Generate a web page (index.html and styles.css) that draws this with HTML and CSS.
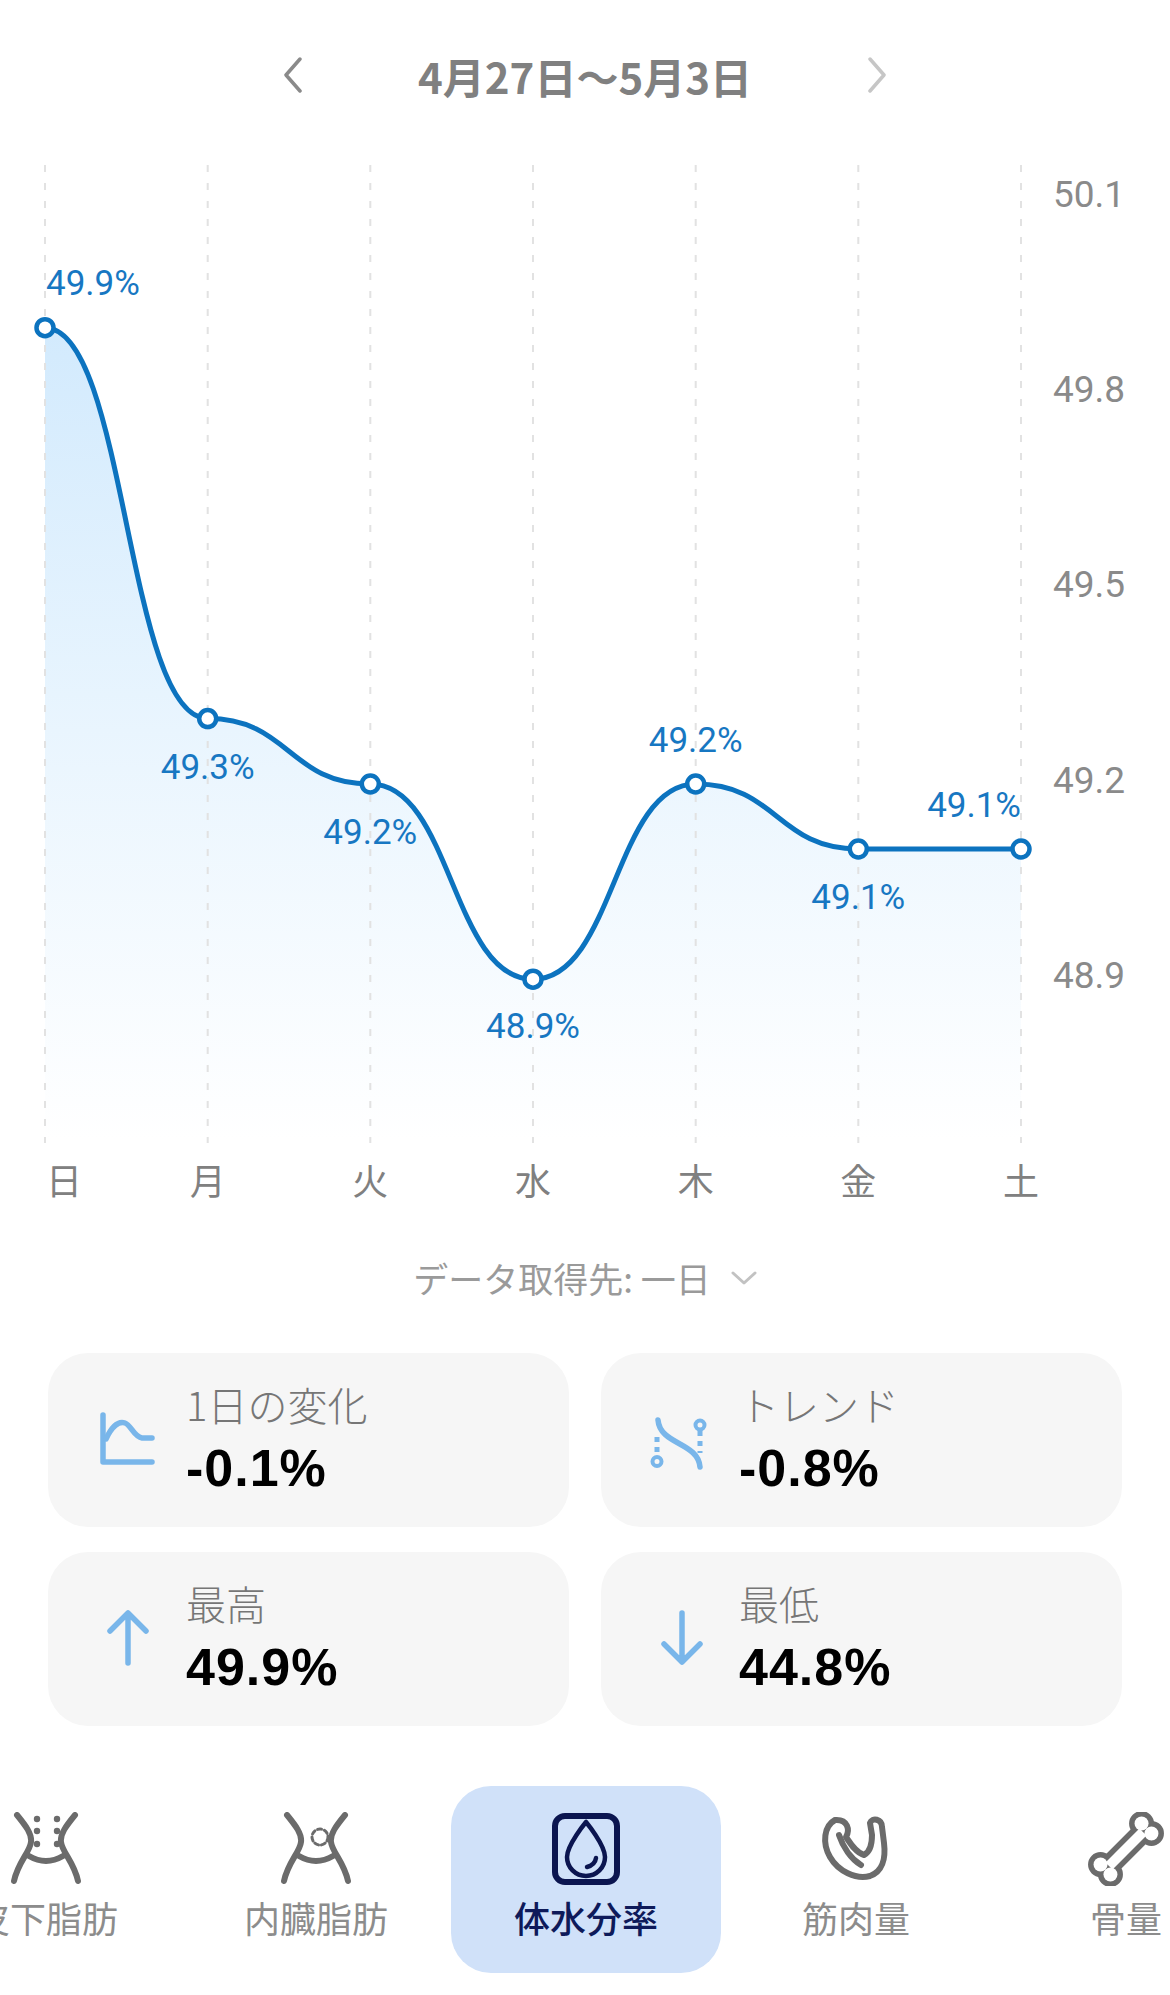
FILE: index.html
```html
<!DOCTYPE html>
<html lang="ja">
<head>
<meta charset="utf-8">
<title>体水分率</title>
<link rel="stylesheet" href="styles.css">
</head>
<body>
<header class="week-nav">
  <svg class="chev chev-prev" viewBox="0 0 20 36" width="20" height="36"><path d="M17 2 L3 18 L17 34"/></svg>
  <h1 class="week-title">4月27日〜5月3日</h1>
  <svg class="chev chev-next" viewBox="0 0 20 36" width="20" height="36"><path d="M3 2 L17 18 L3 34"/></svg>
</header>

<svg class="chart" viewBox="0 150 1170 1070" width="1170" height="1070">
  <defs>
    <linearGradient id="areaFill" x1="0" y1="320" x2="0" y2="1140" gradientUnits="userSpaceOnUse">
      <stop offset="0" stop-color="#d2eafd"/>
      <stop offset="0.5" stop-color="#e9f5fe"/>
      <stop offset="1" stop-color="#ffffff"/>
    </linearGradient>
  </defs>
  <path class="area" fill="url(#areaFill)" d="M45,327.7 C126.35,327.7 126.35,718.6 207.7,718.6 C289,718.6 289,784 370.3,784 C451.65,784 451.65,979.2 533,979.2 C614.35,979.2 614.35,784 695.7,784 C777,784 777,849 858.3,849 C939.65,849 939.65,849 1021,849 L1021,1140 L45,1140 Z"/>
  <g class="grid">
    <line x1="45" y1="165" x2="45" y2="1143"/>
    <line x1="207.7" y1="165" x2="207.7" y2="1143"/>
    <line x1="370.3" y1="165" x2="370.3" y2="1143"/>
    <line x1="533" y1="165" x2="533" y2="1143"/>
    <line x1="695.7" y1="165" x2="695.7" y2="1143"/>
    <line x1="858.3" y1="165" x2="858.3" y2="1143"/>
    <line x1="1021" y1="165" x2="1021" y2="1143"/>
  </g>
  <g class="axis">
    <text x="1053" y="207">50.1</text>
    <text x="1053" y="402">49.8</text>
    <text x="1053" y="597">49.5</text>
    <text x="1053" y="793">49.2</text>
    <text x="1053" y="988">48.9</text>
  </g>
  <path class="line" d="M45,327.7 C126.35,327.7 126.35,718.6 207.7,718.6 C289,718.6 289,784 370.3,784 C451.65,784 451.65,979.2 533,979.2 C614.35,979.2 614.35,784 695.7,784 C777,784 777,849 858.3,849 C939.65,849 939.65,849 1021,849"/>
  <g class="dots">
    <circle cx="45" cy="327.7" r="8.5"/>
    <circle cx="207.7" cy="718.6" r="8.5"/>
    <circle cx="370.3" cy="784" r="8.5"/>
    <circle cx="533" cy="979.2" r="8.5"/>
    <circle cx="695.7" cy="784" r="8.5"/>
    <circle cx="858.3" cy="849" r="8.5"/>
    <circle cx="1021" cy="849" r="8.5"/>
  </g>
  <g class="vals">
    <text x="46" y="295">49.9%</text>
    <text x="207.7" y="779" text-anchor="middle">49.3%</text>
    <text x="370.3" y="844" text-anchor="middle">49.2%</text>
    <text x="533" y="1038" text-anchor="middle">48.9%</text>
    <text x="695.7" y="752" text-anchor="middle">49.2%</text>
    <text x="858.3" y="909" text-anchor="middle">49.1%</text>
    <text x="1021" y="817" text-anchor="end">49.1%</text>
  </g>
  <g class="days">
    <text x="46" y="1195">日</text>
    <text x="207.7" y="1195" text-anchor="middle">月</text>
    <text x="370.3" y="1195" text-anchor="middle">火</text>
    <text x="533" y="1195" text-anchor="middle">水</text>
    <text x="695.7" y="1195" text-anchor="middle">木</text>
    <text x="858.3" y="1195" text-anchor="middle">金</text>
    <text x="1021" y="1195" text-anchor="middle">土</text>
  </g>
</svg>

<div class="source">
  <span>データ取得先: 一日</span>
  <svg class="source-chev" viewBox="0 0 26 14" width="26" height="14"><path d="M2 2 L13 12 L24 2"/></svg>
</div>

<section class="stats">
  <div class="stat-card">
    <svg class="stat-icon" viewBox="0 0 60 60" width="60" height="60">
      <path d="M6 5 V52 H55"/>
      <path d="M9 29 C15 16 22 11 28 13 C34 15 37 27 45 28 L55 28"/>
    </svg>
    <div class="stat-text">
      <div class="stat-label">1日の変化</div>
      <div class="stat-value">-0.1%</div>
    </div>
  </div>
  <div class="stat-card">
    <svg class="stat-icon" viewBox="0 0 60 60" width="60" height="60">
      <path d="M8 10 C10 35 48 32 50 57"/>
      <path class="dash" d="M7 27 V46"/>
      <path class="dash" d="M50 21 V43"/>
      <circle class="ring" cx="7" cy="51.5" r="4.5"/>
      <circle class="ring" cx="50" cy="15" r="4.5"/>
    </svg>
    <div class="stat-text">
      <div class="stat-label">トレンド</div>
      <div class="stat-value">-0.8%</div>
    </div>
  </div>
  <div class="stat-card">
    <svg class="stat-icon" viewBox="0 0 60 60" width="60" height="60">
      <path d="M31 5 V54 M13 22 L31 4 L49 22"/>
    </svg>
    <div class="stat-text">
      <div class="stat-label">最高</div>
      <div class="stat-value">49.9%</div>
    </div>
  </div>
  <div class="stat-card">
    <svg class="stat-icon" viewBox="0 0 60 60" width="60" height="60">
      <path d="M32 4 V53 M14 35 L32 53 L50 35"/>
    </svg>
    <div class="stat-text">
      <div class="stat-label">最低</div>
      <div class="stat-value">44.8%</div>
    </div>
  </div>
</section>

<nav class="nav-wrap">
  <div class="nav">
    <div class="nav-item">
      <svg class="nav-icon" viewBox="0 0 72 74" width="72" height="74">
        <path d="M7 3 C16 14 22 22 21 30 C20 40 8 50 4 69"/>
        <path d="M65 3 C56 14 50 22 51 30 C52 40 64 50 68 69"/>
        <path d="M19 44 Q36 54 53 44"/>
        <g class="fill">
          <circle cx="27" cy="7" r="3.2"/><circle cx="47" cy="7" r="3.2"/>
          <circle cx="27" cy="19" r="3.2"/><circle cx="47" cy="19" r="3.2"/>
          <circle cx="27" cy="32" r="3.2"/><circle cx="47" cy="32" r="3.2"/>
        </g>
      </svg>
      <span class="nav-label">皮下脂肪</span>
    </div>
    <div class="nav-item">
      <svg class="nav-icon" viewBox="0 0 72 74" width="72" height="74">
        <path d="M7 3 C16 14 22 22 21 30 C20 40 8 50 4 69"/>
        <path d="M65 3 C56 14 50 22 51 30 C52 40 64 50 68 69"/>
        <path d="M19 44 Q36 54 53 44"/>
        <circle class="dashed" cx="40" cy="25" r="8"/>
      </svg>
      <span class="nav-label">内臓脂肪</span>
    </div>
    <div class="nav-item active">
      <svg class="nav-icon" viewBox="0 0 72 74" width="72" height="74">
        <rect x="5" y="4" width="62" height="66" rx="10"/>
        <path class="thin" d="M36 10 C36 10 17 33 17 45 A19 19 0 0 0 55 45 C55 33 36 10 36 10 Z"/>
        <path class="thin" d="M46 46 Q45 53 37 55"/>
      </svg>
      <span class="nav-label">体水分率</span>
    </div>
    <div class="nav-item">
      <svg class="nav-icon" viewBox="0 0 74 74" width="74" height="74">
        <path d="M16 8 C5 14 3 31 11 45 C19 59 37 68 51 64 C63 60 67 47 65 31 L63 15 C63 7 53 5 51 11 L53 23 C53 31 51 40 45 43 C37 41 31 31 27 25 C31 18 29 7 16 8 Z"/>
        <path d="M20 23 C24 35 32 47 42 53"/>
      </svg>
      <span class="nav-label">筋肉量</span>
    </div>
    <div class="nav-item">
      <svg class="nav-icon bone" viewBox="0 0 80 74" width="80" height="74">
        <g transform="translate(40 37) rotate(-45)">
          <g class="bone-out">
            <rect x="-24" y="-5" width="48" height="10"/>
            <circle cx="-29" cy="-7" r="7"/><circle cx="-29" cy="7" r="7"/>
            <circle cx="29" cy="-7" r="7"/><circle cx="29" cy="7" r="7"/>
          </g>
          <g class="bone-in">
            <rect x="-24" y="-5" width="48" height="10"/>
            <circle cx="-29" cy="-7" r="7"/><circle cx="-29" cy="7" r="7"/>
            <circle cx="29" cy="-7" r="7"/><circle cx="29" cy="7" r="7"/>
          </g>
        </g>
      </svg>
      <span class="nav-label">骨量</span>
    </div>
  </div>
</nav>
</body>
</html>
```

FILE: styles.css
```css
html, body {
  margin: 0;
  padding: 0;
  background: #ffffff;
}
body {
  width: 1170px;
  overflow: hidden;
  font-family: "Noto Sans CJK JP", "Liberation Sans", sans-serif;
}

/* header */
.week-nav {
  height: 150px;
  display: flex;
  justify-content: center;
  align-items: center;
  gap: 115px;
}
.week-title {
  margin: 0;
  font-size: 42px;
  font-weight: 700;
  color: #808080;
  letter-spacing: 0;
}
.chev { display: block; }
.chev path {
  fill: none;
  stroke-width: 3.5;
  stroke-linecap: round;
  stroke-linejoin: round;
}
.chev-prev path { stroke: #8a8a8a; }
.chev-next path { stroke: #c6c6c6; }

/* chart */
.chart { display: block; }
.grid line {
  stroke: #e2e2e2;
  stroke-width: 2;
  stroke-dasharray: 7 11;
}
.line {
  fill: none;
  stroke: #0c73bf;
  stroke-width: 5;
  stroke-linecap: round;
}
.dots circle {
  fill: #ffffff;
  stroke: #0c73bf;
  stroke-width: 4.5;
}
.vals text {
  font-family: Roboto, "Liberation Sans", sans-serif;
  font-size: 35px;
  fill: #1777c2;
}
.axis text {
  font-family: Roboto, "Liberation Sans", sans-serif;
  font-size: 37px;
  fill: #8a8a8a;
}
.days text {
  font-family: "Noto Sans CJK JP", sans-serif;
  font-size: 36px;
  fill: #808080;
}

/* data source */
.source {
  margin-top: 28px;
  height: 60px;
  line-height: 60px;
  display: flex;
  justify-content: center;
  align-items: center;
  font-size: 35px;
  color: #9a9a9a;
}
.source-chev {
  margin-left: 20px;
}
.source-chev path {
  fill: none;
  stroke: #c2c2c2;
  stroke-width: 3;
  stroke-linecap: round;
  stroke-linejoin: round;
}

/* stats */
.stats {
  margin-top: 45px;
  padding: 0 48px;
  display: grid;
  grid-template-columns: 1fr 1fr;
  column-gap: 32px;
  row-gap: 25px;
}
.stat-card {
  height: 174px;
  border-radius: 40px;
  background: #f6f6f6;
  display: flex;
  align-items: center;
  padding-left: 49px;
}
.stat-icon {
  flex: none;
  margin-right: 29px;
}
.stat-icon path, .stat-icon circle {
  fill: none;
  stroke: #79b6ea;
  stroke-width: 5.5;
  stroke-linecap: round;
  stroke-linejoin: round;
}
.stat-icon .dash {
  stroke-width: 5;
  stroke-dasharray: 5 5;
  stroke-linecap: butt;
}
.stat-icon .ring {
  stroke-width: 4;
}
.stat-text {
  display: flex;
  flex-direction: column;
}
.stat-label {
  font-family: "Noto Sans CJK JP", sans-serif;
  font-size: 40px;
  line-height: 44px;
  font-weight: 300;
  color: #767676;
}
.stat-value {
  margin-top: 12px;
  font-family: "Liberation Sans", Arial, sans-serif;
  font-size: 52px;
  line-height: 60px;
  font-weight: 700;
  color: #000000;
  letter-spacing: 1px;
}

/* bottom nav */
.nav-wrap {
  margin-top: 60px;
  width: 1170px;
  overflow: hidden;
}
.nav {
  display: flex;
  margin-left: -89px;
}
.nav-item {
  flex: none;
  width: 270px;
  height: 187px;
  box-sizing: border-box;
  padding-top: 26px;
  border-radius: 40px;
  display: flex;
  flex-direction: column;
  align-items: center;
}
.nav-item.active {
  background: #d0e1f9;
}
.nav-icon {
  display: block;
  height: 74px;
}
.nav-icon path, .nav-icon circle, .nav-icon rect {
  fill: none;
  stroke: #6b6b6b;
  stroke-width: 6;
  stroke-linecap: round;
  stroke-linejoin: round;
}
.nav-icon .fill circle {
  fill: #6b6b6b;
  stroke: none;
}
.nav-icon .dashed {
  stroke-width: 3;
  stroke-dasharray: 4 3;
}
.nav-icon .bone-out rect, .nav-icon .bone-out circle {
  fill: #6b6b6b;
  stroke: #6b6b6b;
  stroke-width: 11;
}
.nav-icon .bone-in rect, .nav-icon .bone-in circle {
  fill: #ffffff;
  stroke: none;
}
.nav-item.active .nav-icon rect,
.nav-item.active .nav-icon path {
  stroke: #0b1550;
}
.nav-item.active .nav-icon .thin {
  stroke-width: 4.5;
}
.nav-label {
  margin-top: 11px;
  font-size: 36px;
  line-height: 40px;
  color: #8c8c8c;
}
.nav-item.active .nav-label {
  color: #0e1a5a;
  font-weight: 500;
}
```
